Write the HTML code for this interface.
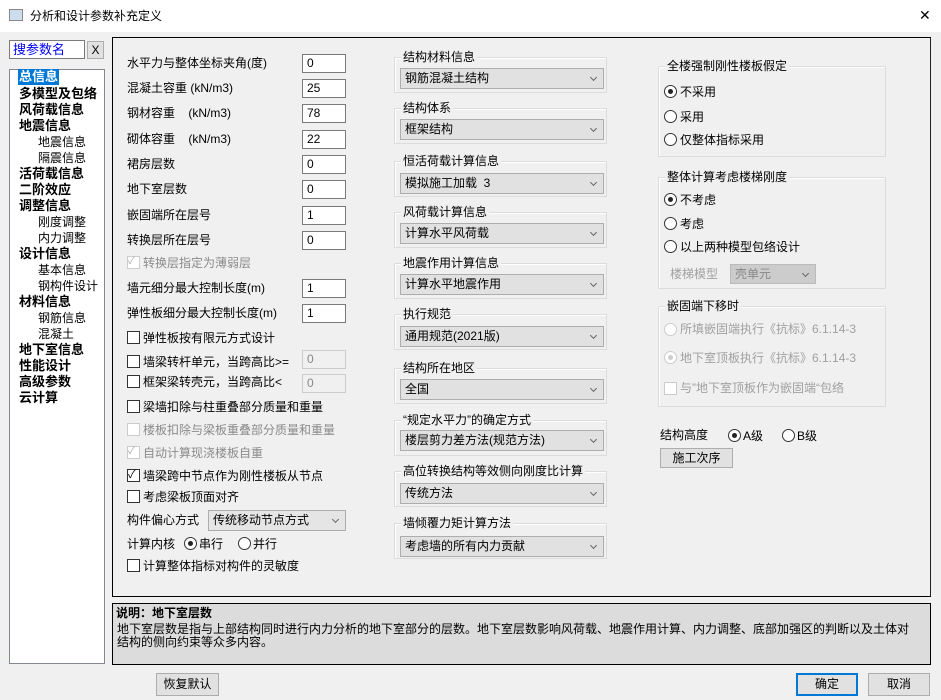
<!DOCTYPE html>
<html><head><meta charset="utf-8"><style>
*{box-sizing:border-box;margin:0;padding:0}
body{width:941px;height:700px;background:#f0f0f0;font-family:"Liberation Sans","Noto Sans CJK SC","WenQuanYi Zen Hei",sans-serif;font-size:12px;color:#000;position:relative;overflow:hidden}
.a{position:absolute;white-space:nowrap}
.t{position:absolute;white-space:nowrap;line-height:14px}
.in{position:absolute;background:#fff;border:1px solid #7a7a7a;height:19px;width:44px;padding-left:4px;line-height:17px;font-size:12px}
.in.d{background:#f0f0f0;border-color:#ccc;color:#888}
.cb{position:absolute;width:13px;height:13px;border:1px solid #333;background:#fff}
.cb.d{border-color:#ccc}
.rb{position:absolute;width:13px;height:13px;border:1px solid #333;border-radius:50%;background:#fff}
.rb.on::after{content:"";position:absolute;left:3px;top:3px;width:5px;height:5px;border-radius:50%;background:#222}
.rb.d{border-color:#ccc}.rb.d.on::after{background:#ccc}
.grp{position:absolute;border:1px solid #dcdcdc;box-shadow:inset 1px 1px 0 #fff}
.gt{position:absolute;background:#f0f0f0;padding:0 2px;line-height:14px;white-space:nowrap}
.sel{position:absolute;background:#e1e1e1;border:1px solid #adadad;height:21px;padding-left:4px;line-height:19px;font-size:12px}
.sel::after{content:"";position:absolute;right:7px;top:6px;width:4px;height:4px;border-right:1px solid #666;border-bottom:1px solid #666;transform:rotate(45deg)}
.btn{position:absolute;background:#e1e1e1;border:1px solid #adadad;text-align:center;line-height:20px;font-size:12px}
.tr{position:absolute;font-weight:bold;font-size:13px;line-height:16px;white-space:nowrap;left:19px}
.tr.s{font-weight:normal;left:38px;font-size:12px}
.g{color:#8a8a8a}
</style></head><body>
<div class="a" style="left:0;top:0;width:941px;height:32px;background:#fff"></div>
<div class="a" style="left:9px;top:9px;width:14px;height:12px;border:1px solid #888;background:#cde"></div>
<div class="t" style="left:30px;top:9px;font-size:12px">分析和设计参数补充定义</div>
<div class="t" style="left:919px;top:8px;font-size:14px;font-weight:normal">✕</div>

<div class="a" style="left:9px;top:40px;width:76px;height:19px;background:#fff;border:1px solid #7a7a7a;color:#00f;padding-left:3px;line-height:17px;font-size:13px">搜参数名</div>
<div class="btn" style="left:87px;top:41px;width:17px;height:18px;line-height:16px">X</div>

<div class="a" style="left:9px;top:69px;width:96px;height:595px;background:#fff;border:1px solid #828790"></div>
<div class="tr" style="top:69px;left:18px;background:#0078d7;color:#fff;padding:0 1px">总信息</div>
<div class="tr" style="top:86px">多模型及包络</div>
<div class="tr" style="top:102px">风荷载信息</div>
<div class="tr" style="top:118px">地震信息</div>
<div class="tr s" style="top:134px">地震信息</div>
<div class="tr s" style="top:150px">隔震信息</div>
<div class="tr" style="top:166px">活荷载信息</div>
<div class="tr" style="top:182px">二阶效应</div>
<div class="tr" style="top:198px">调整信息</div>
<div class="tr s" style="top:214px">刚度调整</div>
<div class="tr s" style="top:230px">内力调整</div>
<div class="tr" style="top:246px">设计信息</div>
<div class="tr s" style="top:262px">基本信息</div>
<div class="tr s" style="top:278px">钢构件设计</div>
<div class="tr" style="top:294px">材料信息</div>
<div class="tr s" style="top:310px">钢筋信息</div>
<div class="tr s" style="top:326px">混凝土</div>
<div class="tr" style="top:342px">地下室信息</div>
<div class="tr" style="top:358px">性能设计</div>
<div class="tr" style="top:374px">高级参数</div>
<div class="tr" style="top:390px">云计算</div>

<div class="a" style="left:112px;top:37px;width:819px;height:560px;border:1px solid #000;border-right-color:#222"></div>

<div class="t" style="left:127px;top:56px">水平力与整体坐标夹角(度)</div><div class="in" style="left:302px;top:54px">0</div>
<div class="t" style="left:127px;top:81px">混凝土容重 (kN/m3)</div><div class="in" style="left:302px;top:79px">25</div>
<div class="t" style="left:127px;top:106px">钢材容重&nbsp;&nbsp;&nbsp;&nbsp;(kN/m3)</div><div class="in" style="left:302px;top:104px">78</div>
<div class="t" style="left:127px;top:132px">砌体容重&nbsp;&nbsp;&nbsp;&nbsp;(kN/m3)</div><div class="in" style="left:302px;top:130px">22</div>
<div class="t" style="left:127px;top:157px">裙房层数</div><div class="in" style="left:302px;top:155px">0</div>
<div class="t" style="left:127px;top:182px">地下室层数</div><div class="in" style="left:302px;top:180px">0</div>
<div class="t" style="left:127px;top:208px">嵌固端所在层号</div><div class="in" style="left:302px;top:206px">1</div>
<div class="t" style="left:127px;top:233px">转换层所在层号</div><div class="in" style="left:302px;top:231px">0</div>
<div class="cb d" style="left:127px;top:256px"></div><div class="t g" style="left:128px;top:255px;font-size:10px;color:#aaa">✓</div><div class="t g" style="left:143px;top:256px">转换层指定为薄弱层</div>
<div class="t" style="left:127px;top:281px">墙元细分最大控制长度(m)</div><div class="in" style="left:302px;top:279px">1</div>
<div class="t" style="left:127px;top:306px">弹性板细分最大控制长度(m)</div><div class="in" style="left:302px;top:304px">1</div>
<div class="cb" style="left:127px;top:331px"></div><div class="t" style="left:143px;top:331px">弹性板按有限元方式设计</div>
<div class="cb" style="left:127px;top:355px"></div><div class="t" style="left:143px;top:355px">墙梁转杆单元，当跨高比&gt;=</div><div class="in d" style="left:302px;top:350px">0</div>
<div class="cb" style="left:127px;top:375px"></div><div class="t" style="left:143px;top:375px">框架梁转壳元，当跨高比&lt;</div><div class="in d" style="left:302px;top:374px">0</div>
<div class="cb" style="left:127px;top:400px"></div><div class="t" style="left:143px;top:400px">梁墙扣除与柱重叠部分质量和重量</div>
<div class="cb d" style="left:127px;top:423px"></div><div class="t g" style="left:143px;top:423px">楼板扣除与梁板重叠部分质量和重量</div>
<div class="cb d" style="left:127px;top:446px"></div><div class="t" style="left:128px;top:445px;font-size:10px;color:#aaa">✓</div><div class="t g" style="left:143px;top:446px">自动计算现浇楼板自重</div>
<div class="cb" style="left:127px;top:469px"></div><div class="t" style="left:128px;top:468px;font-size:11px">✓</div><div class="t" style="left:143px;top:469px">墙梁跨中节点作为刚性楼板从节点</div>
<div class="cb" style="left:127px;top:490px"></div><div class="t" style="left:143px;top:490px">考虑梁板顶面对齐</div>
<div class="t" style="left:127px;top:513px">构件偏心方式</div><div class="sel" style="left:208px;top:510px;width:138px;background:#e5e5e5">传统移动节点方式</div>
<div class="t" style="left:127px;top:537px">计算内核</div><div class="rb on" style="left:184px;top:537px"></div><div class="t" style="left:199px;top:537px">串行</div><div class="rb" style="left:238px;top:537px"></div><div class="t" style="left:253px;top:537px">并行</div>
<div class="cb" style="left:127px;top:559px"></div><div class="t" style="left:143px;top:559px">计算整体指标对构件的灵敏度</div>

<div class="grp" style="left:394px;top:57px;width:213px;height:36px"></div><div class="gt" style="left:401px;top:50px">结构材料信息</div><div class="sel" style="left:400px;top:68px;width:204px">钢筋混凝土结构</div>
<div class="grp" style="left:394px;top:108px;width:213px;height:36px"></div><div class="gt" style="left:401px;top:101px">结构体系</div><div class="sel" style="left:400px;top:119px;width:204px">框架结构</div>
<div class="grp" style="left:394px;top:161px;width:213px;height:36px"></div><div class="gt" style="left:401px;top:154px">恒活荷载计算信息</div><div class="sel" style="left:400px;top:173px;width:204px">模拟施工加载 &nbsp;3</div>
<div class="grp" style="left:394px;top:212px;width:213px;height:36px"></div><div class="gt" style="left:401px;top:205px">风荷载计算信息</div><div class="sel" style="left:400px;top:223px;width:204px">计算水平风荷载</div>
<div class="grp" style="left:394px;top:263px;width:213px;height:36px"></div><div class="gt" style="left:401px;top:256px">地震作用计算信息</div><div class="sel" style="left:400px;top:274px;width:204px">计算水平地震作用</div>
<div class="grp" style="left:394px;top:314px;width:213px;height:36px"></div><div class="gt" style="left:401px;top:307px">执行规范</div><div class="sel" style="left:400px;top:326px;width:204px">通用规范(2021版)</div>
<div class="grp" style="left:394px;top:368px;width:213px;height:36px"></div><div class="gt" style="left:401px;top:361px">结构所在地区</div><div class="sel" style="left:400px;top:379px;width:204px">全国</div>
<div class="grp" style="left:394px;top:420px;width:213px;height:36px"></div><div class="gt" style="left:401px;top:413px">“规定水平力”的确定方式</div><div class="sel" style="left:400px;top:430px;width:204px">楼层剪力差方法(规范方法)</div>
<div class="grp" style="left:394px;top:471px;width:213px;height:36px"></div><div class="gt" style="left:401px;top:464px">高位转换结构等效侧向刚度比计算</div><div class="sel" style="left:400px;top:483px;width:204px">传统方法</div>
<div class="grp" style="left:394px;top:523px;width:213px;height:36px"></div><div class="gt" style="left:401px;top:516px">墙倾覆力矩计算方法</div><div class="sel" style="left:400px;top:536px;width:204px">考虑墙的所有内力贡献</div>

<div class="grp" style="left:658px;top:66px;width:228px;height:91px"></div><div class="gt" style="left:665px;top:59px">全楼强制刚性楼板假定</div>
<div class="rb on" style="left:664px;top:85px"></div><div class="t" style="left:680px;top:85px">不采用</div>
<div class="rb" style="left:664px;top:110px"></div><div class="t" style="left:680px;top:110px">采用</div>
<div class="rb" style="left:664px;top:133px"></div><div class="t" style="left:680px;top:133px">仅整体指标采用</div>
<div class="grp" style="left:658px;top:177px;width:228px;height:112px"></div><div class="gt" style="left:665px;top:170px">整体计算考虑楼梯刚度</div>
<div class="rb on" style="left:664px;top:193px"></div><div class="t" style="left:680px;top:193px">不考虑</div>
<div class="rb" style="left:664px;top:217px"></div><div class="t" style="left:680px;top:217px">考虑</div>
<div class="rb" style="left:664px;top:240px"></div><div class="t" style="left:680px;top:240px">以上两种模型包络设计</div>
<div class="t g" style="left:670px;top:267px;color:#a0a0a0">楼梯模型</div><div class="sel" style="left:730px;top:264px;width:86px;height:20px;color:#888;background:#ccc;border-color:#bbb">壳单元</div>
<div class="grp" style="left:658px;top:306px;width:228px;height:101px"></div><div class="gt" style="left:665px;top:299px">嵌固端下移时</div>
<div class="rb d" style="left:664px;top:323px"></div><div class="t g" style="left:680px;top:322px;color:#a0a0a0">所填嵌固端执行《抗标》6.1.14-3</div>
<div class="rb d on" style="left:664px;top:351px"></div><div class="t g" style="left:680px;top:351px;color:#a0a0a0">地下室顶板执行《抗标》6.1.14-3</div>
<div class="cb d" style="left:664px;top:382px"></div><div class="t g" style="left:680px;top:381px;color:#a0a0a0">与”地下室顶板作为嵌固端“包络</div>
<div class="t" style="left:660px;top:428px">结构高度</div>
<div class="rb on" style="left:728px;top:429px"></div><div class="t" style="left:743px;top:429px">A级</div>
<div class="rb" style="left:782px;top:429px"></div><div class="t" style="left:797px;top:429px">B级</div>
<div class="btn" style="left:660px;top:448px;width:73px;height:20px;line-height:18px">施工次序</div>

<div class="a" style="left:112px;top:603px;width:819px;height:62px;background:#dcdcdc;border:1px solid #000"></div>
<div class="t" style="left:116px;top:606px;font-weight:bold;font-size:12px">说明：地下室层数</div>
<div class="a" style="left:117px;top:623px;width:798px;white-space:normal;line-height:13px;font-size:12px;word-break:break-all">地下室层数是指与上部结构同时进行内力分析的地下室部分的层数。地下室层数影响风荷载、地震作用计算、内力调整、底部加强区的判断以及土体对结构的侧向约束等众多内容。</div>

<div class="btn" style="left:156px;top:673px;width:63px;height:23px">恢复默认</div>
<div class="btn" style="left:796px;top:673px;width:62px;height:23px;border:2px solid #0078d7;line-height:19px">确定</div>
<div class="btn" style="left:868px;top:673px;width:62px;height:23px">取消</div>
</body></html>
